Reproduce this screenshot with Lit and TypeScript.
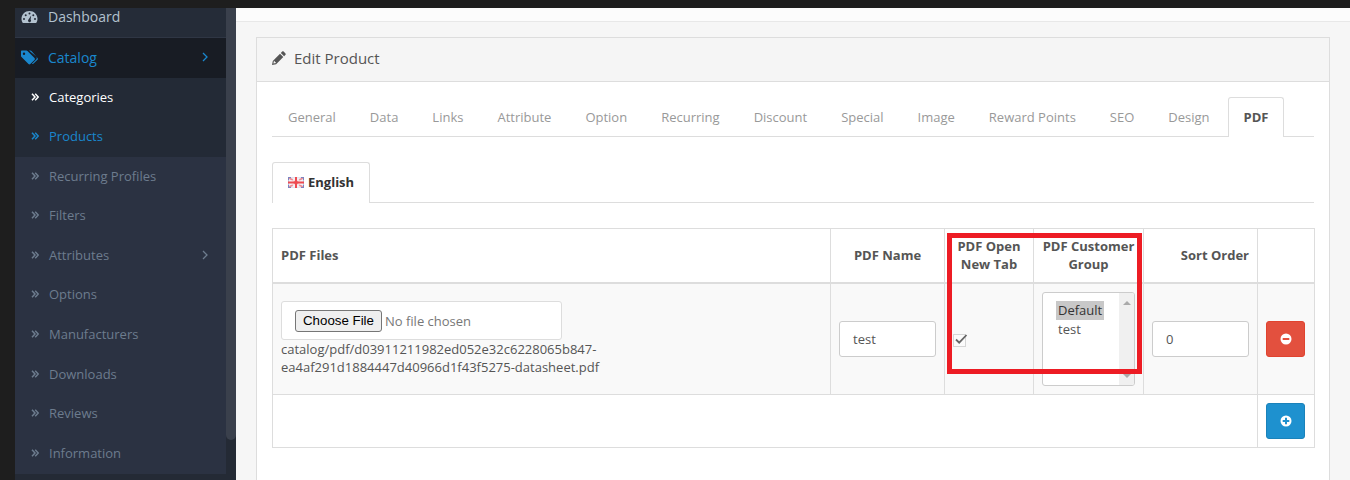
import { LitElement, html, css, svg } from "lit";
import { customElement } from "lit/decorators.js";

const dchev = svg`<svg class="dc" viewBox="0 0 8 8" width="8" height="8"><path d="M1 .8 4 4 1 7.2M4.2 .8 7.2 4 4.2 7.2" fill="none" stroke="currentColor" stroke-width="1.5"/></svg>`;
const chev = svg`<svg class="rc" viewBox="0 0 6 10" width="6" height="10"><path d="M1 1l4 4-4 4" fill="none" stroke="currentColor" stroke-width="1.3"/></svg>`;
const dash = svg`<svg class="ic" viewBox="0 0 17 14" width="17" height="14"><path fill-rule="evenodd" fill="currentColor" d="M8.5 1C4 1 .5 4.4.5 8.8c0 1.700.5 3.200 1.300 4.200h13.400c.8-1 1.300-2.500 1.300-4.200C16.500 4.400 13 1 8.500 1zM8.500 2.600a1 1 0 1 1 0 2 1 1 0 0 1 0-2zM4.700 4.300a1 1 0 1 1 0 2 1 1 0 0 1 0-2zM12.300 4.300a1 1 0 1 1 0 2 1 1 0 0 1 0-2zM3 8a1 1 0 1 1 0 2 1 1 0 0 1 0-2zM14 8a1 1 0 1 1 0 2 1 1 0 0 1 0-2zM10.200 5.400 9.600 9.600a1.500 1.500 0 1 1-2.100 0z"/></svg>`;
const tags = svg`<svg class="ic" viewBox="0 0 17 15" width="17" height="15"><path fill="currentColor" fill-rule="evenodd" d="M0 1.300V6c0 .4.200.8.500 1.100l7 7c.5.500 1.300.5 1.800 0l4.200-4.200c.5-.5.500-1.300 0-1.800l-7-7C6.200.800 5.800.600 5.400.600H.7a.7.7 0 0 0-.7.700zM3 2.500a1.200 1.200 0 1 1 0 2.400 1.200 1.200 0 0 1 0-2.400z"/><path fill="currentColor" d="M8 .6h1.400c.4 0 .8.200 1.100.500l6 6.800c.5.500.5 1.300 0 1.800l-3.900 3.900c-.5.500-1.200.5-1.700.1l4.300-4.300c.8-.8.800-2 0-2.800z"/></svg>`;
const pencil = svg`<svg viewBox="0 0 14 14" width="14" height="14"><path fill="#555" d="M10.200.500c.4-.4 1-.4 1.400 0l1.900 1.900c.4.400.4 1 0 1.400l-1.400 1.400-3.300-3.300zM8 2.700l3.300 3.300-7.200 7.200-4.100.8.800-4.100zM2 9.800l-.6 2.800 2.800-.6z"/></svg>`;
const flag = svg`<svg class="flag" viewBox="0 0 16 11" width="16" height="11"><rect width="16" height="11" fill="#e6e4ee"/><path d="M0 0 16 11M16 0 0 11" stroke="#ee8a90" stroke-width="1.500"/><path d="M0 .5h3M13 .5h3M0 10.500h3M13 10.500h3M.5 0v11M15.500 0v11" stroke="#7c84bf"/><path d="M0 4h6V1M10 1v3h6M0 7h6v3M10 10V7h6" stroke="#fff" fill="none"/><path d="M8 0v11M0 5.500h16" stroke="#ee4a50" stroke-width="2"/></svg>`;
const minus = svg`<svg viewBox="0 0 12 12" width="12" height="12"><circle cx="6" cy="6" r="5.500" fill="#fff"/><rect x="2.700" y="5" width="6.600" height="2" fill="#e3503e"/></svg>`;
const plus = svg`<svg viewBox="0 0 12 12" width="12" height="12"><circle cx="6" cy="6" r="5.500" fill="#fff"/><path d="M2.700 6h6.600M6 2.700v6.600" stroke="#1e91cf" stroke-width="2"/></svg>`;

const subs: [string, string, boolean][] = [
  ["Categories", "white", false],
  ["Products", "blue", false],
  ["Recurring Profiles", "", false],
  ["Filters", "", false],
  ["Attributes", "", true],
  ["Options", "", false],
  ["Manufacturers", "", false],
  ["Downloads", "", false],
  ["Reviews", "", false],
  ["Information", "", false],
];
const tabs = ["General","Data","Links","Attribute","Option","Recurring","Discount","Special","Image","Reward Points","SEO","Design"];

@customElement("app-root")
export class AppRoot extends LitElement {
  static styles = css`
    :host { display: block; height: 480px; width: 1350px; overflow: hidden; background: #1e1e1e; font-family: "Open Sans", sans-serif; font-size: 13px; color: #555; }
    * { box-sizing: border-box; }
    .shell { display: flex; height: 472px; margin-top: 8px; padding-left: 15px; }
    .side { width: 221px; flex: none; display: flex; background: #242a35; overflow: hidden; }
    .nav { width: 211px; flex: none; }
    .track { width: 10px; flex: none; }
    .thumb { height: 432px; background: #3a404c; border-radius: 0 0 5px 5px; }
    .top { height: 30px; background: #252c38; border-bottom: 1px solid #2f3644; display: flex; align-items: flex-start; padding: 0 0 0 6px; color: #b3c2cf; font-size: 14px; line-height: 18px; }
    .top .ic { margin-top: 2px; margin-right: 10px; }
    .cat { height: 40px; background: #181c24; display: flex; align-items: center; padding: 0 0 2px 6px; color: #1a87cd; font-size: 14px; }
    .cat .ic { margin-right: 10px; }
    .cat .rc { margin-left: auto; margin-right: 18px; }
    .sub { background: #2b3242; height: 396px; }
    .item { height: 39.55px; display: flex; align-items: center; padding: 0 0 2.1px 16px; color: #6d7c8e; font-size: 13px; }
    .item.white { background: #232a36; color: #fff; }
    .item.blue { background: #232a36; color: #1a87cd; }
    .dc { margin-right: 10px; flex: none; }
    .item .rc { margin-left: auto; margin-right: 18px; }
    .main { flex: 1; background: #f6f6f6; min-width: 0; }
    .hdr { height: 14px; background: #fcfcfc; border-bottom: 1px solid #e8e8e8; }
    .panel { margin: 15px 20px 0; background: #fff; border: 1px solid #ddd; height: 500px; }
    .ph { height: 44px; background: #f5f5f5; border-bottom: 1px solid #ddd; display: flex; align-items: center; gap: 8px; padding: 0 15px 4px; font-size: 15px; color: #555; }
    .pb { padding: 15px; }
    .tabs { display: flex; border-bottom: 1px solid #ddd; height: 40px; margin-bottom: 25px; }
    .tab { height: 40px; padding: 0 15px 2px; margin-right: 2px; display: flex; align-items: center; color: #999; border: 1px solid transparent; border-bottom: 0; white-space: nowrap; }
    .tab.on { font-weight: 700; color: #555; background: #fff; border-color: #ddd; border-radius: 3px 3px 0 0; margin-right: 0; }
    .lang { height: 41px; margin-bottom: 25px; border-bottom: 1px solid #ddd; display: flex; }
    .ltab { height: 41px; width: 98px; background: #fff; border: 1px solid #ddd; border-bottom: 0; border-radius: 3px 3px 0 0; display: flex; align-items: center; padding: 0 0 2px 15px; gap: 4px; font-weight: 700; color: #333; }
    .wrap { position: relative; }
    .mark { position: absolute; left: 675px; top: 5px; width: 195px; height: 141px; border: 5px solid #ed1c24; pointer-events: none; }
    table { border-collapse: collapse; table-layout: fixed; width: 1042px; }
    .c1 { width: 558px; } .c2 { width: 114px; } .c3 { width: 89px; } .c4 { width: 110px; } .c5 { width: 114px; } .c6 { width: 57px; }
    th, td { border: 1px solid #ddd; padding: 8px; vertical-align: middle; font-size: 13px; line-height: 18px; }
    th { font-weight: 700; color: #555; height: 54px; border-bottom-width: 2px; }
    th.l { text-align: left; } th.c { text-align: center; padding: 8px 0; } th.r { text-align: right; }
    .row td { background: #f9f9f9; height: 111px; }
    .add td { height: 53px; }
    .file { width: 281px; height: 39px; background: #fff; border: 1px solid #ddd; border-radius: 3px; display: flex; align-items: center; padding-left: 13px; color: #777; margin-bottom: 0; }
    .fbtn { height: 22px; padding: 0 7px; margin-right: 3px; border: 1px solid #767676; border-radius: 3px; background: #efefef; color: #000; font: 13.300px "Liberation Sans", Arial, sans-serif; display: flex; align-items: center; }
    .path { width: 330px; margin-top: 0; }
    .inp { height: 36px; width: 100%; border: 1px solid #ccc; border-radius: 3px; background: #fff; padding: 0 13px; display: flex; align-items: center; color: #555; }
    .ck { width: 13px; height: 13px; background: #fbfbfb; border: 1px solid #d6d6d6; margin-top: 3px; position: relative; display: block; }
    .ck svg { position: absolute; left: 0; top: -3px; }
    .lb { width: 93px; height: 94px; background: #fff; border: 1px solid #ccc; border-radius: 3px; display: flex; overflow: hidden; }
    .opts { flex: 1; padding: 8px 0 0 13px; }
    .opt { height: 19px; line-height: 19px; padding: 0 2px; width: 48px; color: #333; }
    .opt.sel { background: #c8c8c8; }
    .opt.plain { color: #555; }
    .bar { width: 15px; background: #f0f0f0; display: flex; flex-direction: column; justify-content: space-between; align-items: center; padding: 8px 0 7px; }
    .up { width: 0; height: 0; border: 4px solid transparent; border-top: 0; border-bottom: 4px solid #aaa; }
    .dn { width: 0; height: 0; border: 4px solid transparent; border-bottom: 0; border-top: 4px solid #aaa; }
    .btn { width: 39px; height: 36px; border-radius: 3px; display: flex; align-items: center; justify-content: center; }
    .btn.red { background: #e3503e; border: 1px solid #e0432f; }
    .btn.blue { background: #1e91cf; border: 1px solid #1a82ba; }
    td.ctr { padding: 8px; }
  `;

  render() {
    return html`<div class="shell">
      <aside class="side">
        <div class="nav">
          <div class="top">${dash}<span>Dashboard</span></div>
          <div class="cat">${tags}<span>Catalog</span>${chev}</div>
          <div class="sub">
            ${subs.map(([t, c, more]) => html`<div class="item ${c}">${dchev}<span>${t}</span>${more ? chev : ""}</div>`)}
          </div>
        </div>
        <div class="track"><div class="thumb"></div></div>
      </aside>
      <main class="main">
        <div class="hdr"></div>
        <section class="panel">
          <div class="ph">${pencil}<span>Edit Product</span></div>
          <div class="pb">
            <div class="tabs">
              ${tabs.map((t) => html`<div class="tab">${t}</div>`)}
              <div class="tab on">PDF</div>
            </div>
            <div class="lang"><div class="ltab">${flag}<span>English</span></div></div>
            <div class="wrap">
              <table>
                <colgroup><col class="c1"/><col class="c2"/><col class="c3"/><col class="c4"/><col class="c5"/><col class="c6"/></colgroup>
                <thead><tr>
                  <th class="l">PDF Files</th>
                  <th class="c">PDF Name</th>
                  <th class="c">PDF Open New Tab</th>
                  <th class="c">PDF Customer Group</th>
                  <th class="r">Sort Order</th>
                  <th></th>
                </tr></thead>
                <tbody>
                  <tr class="row">
                    <td>
                      <div class="file"><span class="fbtn">Choose File</span>No file chosen</div>
                      <div class="path">catalog/pdf/d03911211982ed052e32c6228065b847-ea4af291d1884447d40966d1f43f5275-datasheet.pdf</div>
                    </td>
                    <td><div class="inp">test</div></td>
                    <td><span class="ck"><svg viewBox="0 0 14 14" width="14" height="14"><path d="M2 7.500l3.200 3.200L12.500 3" fill="none" stroke="#666" stroke-width="1.800"/></svg></span></td>
                    <td><div class="lb"><div class="opts"><div class="opt sel">Default</div><div class="opt plain">test</div></div><div class="bar"><i class="up"></i><i class="dn"></i></div></div></td>
                    <td><div class="inp">0</div></td>
                    <td class="ctr"><div class="btn red">${minus}</div></td>
                  </tr>
                  <tr class="add">
                    <td colspan="5"></td>
                    <td class="ctr"><div class="btn blue">${plus}</div></td>
                  </tr>
                </tbody>
              </table>
              <div class="mark"></div>
            </div>
          </div>
        </section>
      </main>
    </div>`;
  }
}
